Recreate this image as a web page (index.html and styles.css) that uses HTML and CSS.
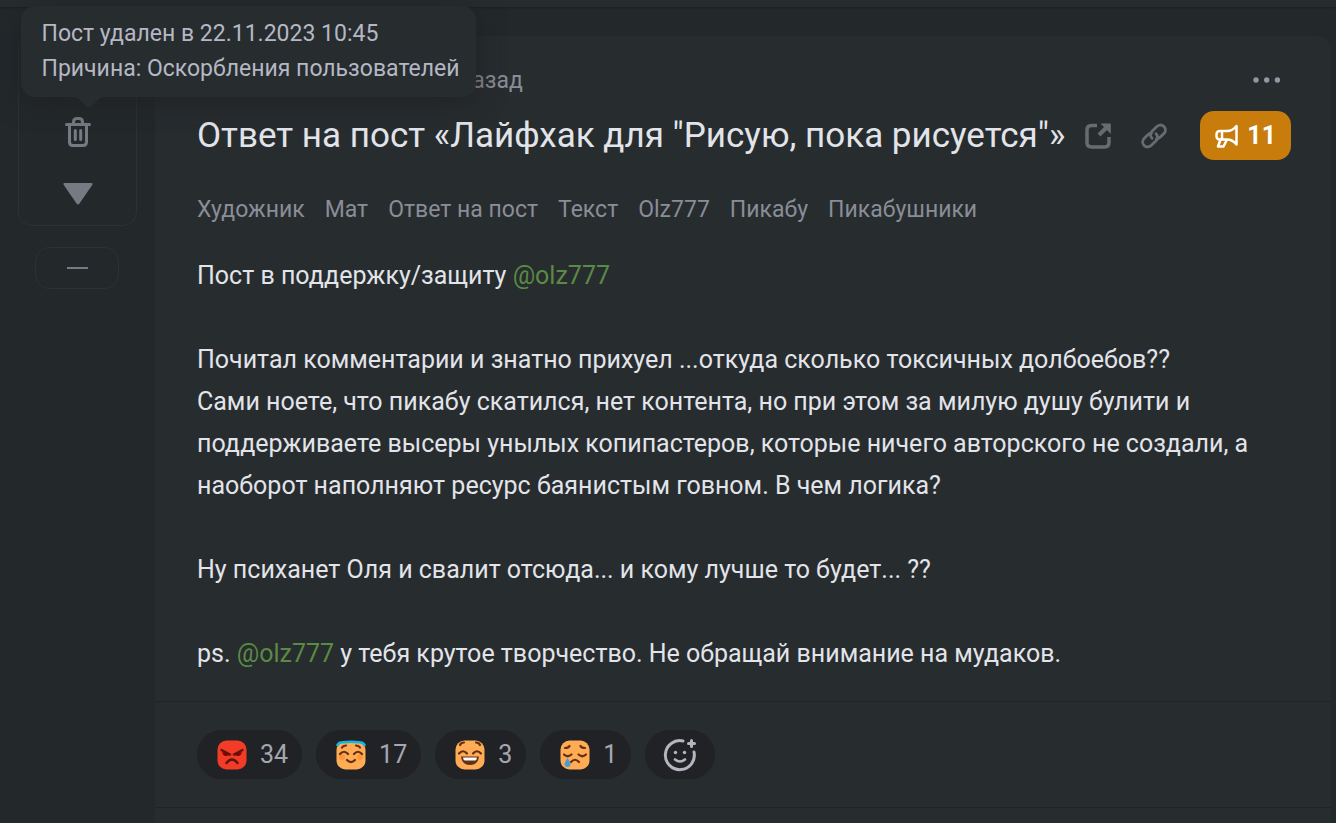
FILE: index.html
```html
<!DOCTYPE html>
<html lang="ru">
<head>
  <meta charset="UTF-8" />
  <meta name="viewport" content="width=device-width, initial-scale=1.0" />
  <title>Ответ на пост «Лайфхак для "Рисую, пока рисуется"»</title>
  <link rel="stylesheet" href="styles.css">
</head>
<body>
  <header class="topbar"></header>

  <main class="page">
    <aside class="rating">
      <div class="rating-box">
        <button class="rating-button" aria-label="Плюс">
          <svg width="30" height="22" viewBox="0 0 30 22"><path d="M2 21h26q2 0 1-2L16 1q-1-1-2 0L1 19q-1 2 1 2z" fill="currentColor"/></svg>
        </button>
        <div class="deleted">
          <button class="rating-button" aria-label="Пост удален" aria-describedby="deletedTip">
            <svg width="26" height="30" viewBox="0 0 26 30" fill="none" stroke="currentColor" stroke-width="3" stroke-linecap="round" stroke-linejoin="round">
              <path d="M1.5 7.5h23M8.500 7V5q0-3.500 3.500-3.500h2q3.500 0 3.500 3.500v2M4.500 8v17q0 3.500 3.500 3.500h10q3.500 0 3.500-3.500V8M10.300 13.500v9M15.700 13.500v9"/>
            </svg>
          </button>
          <div id="deletedTip" class="tooltip" role="tooltip">
            <div>Пост удален в 22.11.2023 10:45</div>
            <div>Причина: Оскорбления пользователей</div>
            <svg class="tooltip-arrow" width="30" height="11" viewBox="0 0 30 11"><path d="M0 0q3 0 6 3l6 6q3 2.500 6 0l6-6q3-3 6-3z" fill="currentColor"/></svg>
          </div>
        </div>
        <button class="rating-button" aria-label="Минус">
          <svg width="30" height="22" viewBox="0 0 30 22"><path d="M2 0h26q2.500 0 1.200 2L16.300 20.800q-1.300 1.600-2.600 0L.8 2Q-.5 0 2 0z" fill="currentColor"/></svg>
        </button>
      </div>
      <button class="collapse" aria-label="Свернуть"><span class="collapse-line"></span></button>
    </aside>

    <article class="post">
      <div class="post-head">
        <a href="#" class="author" aria-label="Автор"><span class="avatar"></span></a>
        <time class="date">назад</time>
        <button class="more" aria-label="Ещё">
          <svg width="28" height="6" viewBox="0 0 28 6" fill="currentColor"><circle cx="3" cy="3" r="2.700"/><circle cx="13.700" cy="3" r="2.700"/><circle cx="24.400" cy="3" r="2.700"/></svg>
        </button>
      </div>

      <div class="title-row">
        <h1 class="title">Ответ на пост «Лайфхак для "Рисую, пока рисуется"»</h1>
        <div class="title-icons">
          <a href="#" aria-label="Открыть в новой вкладке">
            <svg width="26" height="26" viewBox="0 0 26 26" fill="none" stroke="currentColor" stroke-width="3.500">
              <path d="M12 2.500H6.500Q2 2.500 2 7v12.500Q2 24 6.500 24h13q4.500 0 4.500-4.500V14"/>
              <path d="M14 12l8-8" stroke-width="4"/>
              <path d="M15.500.5H25q.8 0 .8.800V11z" fill="currentColor" stroke="none"/>
            </svg>
          </a>
          <a href="#" aria-label="Ссылка">
            <svg width="26" height="26" viewBox="0 0 26 26" fill="none" stroke="currentColor" stroke-width="2.800" stroke-linecap="round" stroke-linejoin="round">
              <path d="M15.500 15.800c1.700 0 2.900-.7 3.900-1.700l3.300-3.300c2.200-2.200 2.200-5.200.2-7.300-2-2-5.200-2-7.300.2l-4.600 4.600c-2.100 2.100-2.100 5 0 7"/>
              <path d="M10.500 10.200c-1.700 0-2.900.7-3.900 1.700l-3.300 3.300c-2.200 2.200-2.200 5.200-.2 7.300 2 2 5.200 2 7.300-.2l4.600-4.600c2.100-2.100 2.100-5 0-7"/>
            </svg>
          </a>
        </div>
        <button class="boost">
          <svg width="24" height="24" viewBox="0 0 24 24" fill="none" stroke="currentColor" stroke-width="2.500" stroke-linejoin="round" stroke-linecap="round">
            <path d="M21.500 2v18.500Q17.500 15.500 12 15.500H5Q1.500 15.500 1.500 12v-1.500Q1.500 7 5 7h7q5.500 0 9.500-5zM7 7.500v7.500M5.500 15.500L3 22.500h5.500l3.500-7"/>
          </svg>
          <span>11</span>
        </button>
      </div>

      <nav class="tags">
        <a href="#">Художник</a>
        <a href="#">Мат</a>
        <a href="#">Ответ на пост</a>
        <a href="#">Текст</a>
        <a href="#">Olz777</a>
        <a href="#">Пикабу</a>
        <a href="#">Пикабушники</a>
      </nav>

      <div class="content">
        <p>Пост в поддержку/защиту <a href="#">@olz777</a></p>
        <p>Почитал комментарии и знатно прихуел ...откуда сколько токсичных долбоебов??<br>
        Сами ноете, что пикабу скатился, нет контента, но при этом за милую душу булити и поддерживаете высеры унылых копипастеров, которые ничего авторского не создали, а наоборот наполняют ресурс баянистым говном. В чем логика?</p>
        <p>Ну психанет Оля и свалит отсюда... и кому лучше то будет... ??</p>
        <p>ps. <a href="#">@olz777</a> у тебя крутое творчество. Не обращай внимание на мудаков.</p>
      </div>

      <div class="reactions">
        <button class="reaction">
          <svg width="30" height="30" viewBox="0 0 30 30" fill="none" stroke-linecap="round">
            <rect x=".5" y=".5" width="29" height="29" rx="9" fill="#f23c27"/>
            <path d="M5 12q1 4 4 4t4-2zM25 12q-1 4-4 4t-4-2z" fill="#8b0000"/>
            <path d="M4.500 10l8.500 4.500M25.500 10L17 14.500M9.500 23q5.500-7 11 0" stroke="#5a160e" stroke-width="2.400"/>
          </svg>
          <span>34</span>
        </button>
        <button class="reaction">
          <svg width="30" height="30" viewBox="0 0 30 30" fill="none" stroke-linecap="round">
            <rect x=".5" y="1" width="29" height="28.500" rx="9" fill="#ffac54"/>
            <path d="M1.500 5q1-2.500 5-2.800 8.500-1 17 0 4 .3 5 2.800" stroke="#12b4e8" stroke-width="2.600"/>
            <circle cx="6" cy="17" r="3" fill="#ff963c"/><circle cx="24" cy="17" r="3" fill="#ff963c"/>
            <path d="M6 7.500q1-1.800 4-2M24 7.500q-1-1.800-4-2M4 14q4-4.500 8 0M18 14q4-4.500 8 0M11 20q4 4 8 0" stroke="#623018" stroke-width="2.200"/>
          </svg>
          <span>17</span>
        </button>
        <button class="reaction">
          <svg width="30" height="30" viewBox="0 0 30 30" fill="none" stroke-linecap="round">
            <rect x=".5" y=".5" width="29" height="29" rx="9" fill="#ffac54"/>
            <path d="M5 5q1-2.500 4-2.500M25 5q-1-2.500-4-2.500M4 13.500q4-4.500 8 0M18 13.500q4-4.500 8 0" stroke="#623018" stroke-width="2.200"/>
            <path d="M6 16.500h18q-1 8.500-9 8.500t-9-8.500z" fill="#623018"/>
            <path d="M8 17.500h14q-.3 3-2 3H10q-1.700 0-2-3z" fill="#fff"/>
          </svg>
          <span>3</span>
        </button>
        <button class="reaction">
          <svg width="30" height="30" viewBox="0 0 30 30" fill="none" stroke-linecap="round">
            <rect x=".5" y=".5" width="29" height="29" rx="9" fill="#ffac54"/>
            <path d="M5 8q3.500 0 4.500-2M25 8q-3.500 0-4.500-2M4 14.500q3.500 3.500 7.500 0M18.500 14.500q4 3.500 7.500 0M11 22q4-4.500 8 0" stroke="#623018" stroke-width="2.200"/>
            <path d="M7.500 18q3 4.500 3 6a3 3 0 0 1-6 0q0-1.500 3-6z" fill="#4a9ad6"/>
          </svg>
          <span>1</span>
        </button>
        <button class="reaction reaction-add" aria-label="Добавить реакцию">
          <svg width="34" height="34" viewBox="0 0 34 34" fill="none" stroke="currentColor" stroke-linecap="round">
            <path d="M20 3A14.500 14.500 0 1 0 31 14" stroke-width="3"/>
            <path d="M12 21.500q5 4 10 0" stroke-width="2.600"/>
            <circle cx="12.500" cy="14.500" r="1.700" fill="currentColor" stroke="none"/>
            <circle cx="21.500" cy="14.500" r="1.700" fill="currentColor" stroke="none"/>
            <path d="M28.500 2.500v6M25.500 5.500h6" stroke-width="3"/>
          </svg>
        </button>
      </div>
    </article>
  </main>
</body>
</html>
```

FILE: styles.css
```css
* {
  box-sizing: border-box;
}

body {
  margin: 0;
  min-height: 100vh;
  display: flex;
  flex-direction: column;
  background: #23282b;
  color: #e2e4ea;
  font-family: Roboto, "Open Sans", sans-serif;
  font-size: 25px;
}

a {
  color: inherit;
  text-decoration: none;
}

button {
  padding: 0;
  border: none;
  background: none;
  font: inherit;
  color: inherit;
  cursor: pointer;
}

svg {
  display: block;
  flex: none;
}

.topbar {
  height: 7px;
  background: #272c2f;
  box-shadow: 0 1px 2px #1d2023;
}

.page {
  flex: 1;
  display: flex;
  padding: 29px 5px 0 0;
}

/* rating column */
.rating {
  width: 155px;
  padding-left: 18px;
  flex: none;
}

.rating-box {
  width: 119px;
  height: 190px;
  border: 1px solid #2d3134;
  border-radius: 14px;
  display: flex;
  flex-direction: column;
  align-items: center;
  justify-content: flex-end;
}

.rating-button {
  width: 62px;
  height: 62px;
  flex: none;
  display: flex;
  align-items: center;
  justify-content: center;
  color: #777a83;
}

.deleted {
  position: relative;
}

.collapse {
  width: 84px;
  height: 42px;
  margin: 21px 0 0 17px;
  border: 1px solid #2d3134;
  border-radius: 14px;
  display: flex;
  align-items: center;
  justify-content: center;
}

.collapse-line {
  width: 21px;
  height: 2px;
  background: #777a83;
}

.tooltip {
  position: absolute;
  left: -26px;
  bottom: 66px;
  z-index: 10;
  padding: 10px 16px 11px 21px;
  border-radius: 14px;
  background: #272c2f;
  box-shadow: 0 4px 28px rgba(30, 30, 33, 0.7);
  color: #b5b8c4;
  font-size: 23px;
  line-height: 35px;
  white-space: nowrap;
}

.tooltip-arrow {
  position: absolute;
  top: 100%;
  left: 53px;
  color: #272c2f;
}

/* post */
.post {
  flex: 1;
  min-width: 0;
  padding-top: 27px;
  background: #272c2f;
  border-radius: 14px 14px 0 0;
}

.post-head,
.title-row,
.tags,
.content {
  margin: 0 40px 0 42px;
}

.post-head {
  height: 34px;
  display: flex;
  align-items: center;
  color: #8a8d97;
  font-size: 23px;
}

.author {
  width: 262px;
}

.avatar {
  display: block;
  width: 32px;
  height: 34px;
  border-radius: 50%;
  background: #6f7440;
}

.more {
  width: 49px;
  height: 34px;
  margin-left: auto;
  display: flex;
  align-items: center;
  justify-content: center;
  color: #9497a3;
}

.title-row {
  margin-top: 14px;
  display: flex;
  align-items: center;
}

.title {
  margin: 0;
  font-size: 35px;
  font-weight: 400;
  line-height: 49px;
}

.title-icons {
  margin-left: 20px;
  display: flex;
  gap: 30px;
  color: #686c70;
}

.boost {
  height: 49px;
  margin-left: auto;
  padding: 0 15px;
  border-radius: 14px;
  display: flex;
  align-items: center;
  gap: 8px;
  background: #c77c0c;
  color: #fff;
  font-weight: 700;
}

.tags {
  margin-top: 36px;
  display: flex;
  flex-wrap: wrap;
  gap: 7px 20px;
  color: #8a8d97;
  font-size: 23px;
  line-height: 28px;
}

.content {
  margin-top: 31px;
  line-height: 42px;
}

.content p {
  margin: 0 0 42px;
}

.content p:last-child {
  margin-bottom: 26px;
}

.content a {
  color: #5b8a45;
}

.reactions {
  display: flex;
  flex-wrap: wrap;
  gap: 14px;
  padding: 28px 42px;
  border-top: 1px solid #212427;
  border-bottom: 1px solid #212427;
}

.reaction {
  height: 49px;
  padding: 0 14px 0 20px;
  border-radius: 25px;
  display: flex;
  align-items: center;
  gap: 13px;
  background: #212226;
  color: #a5a7b0;
}

.reaction-add {
  padding: 0 18px;
  color: #b4b5bf;
}
```
